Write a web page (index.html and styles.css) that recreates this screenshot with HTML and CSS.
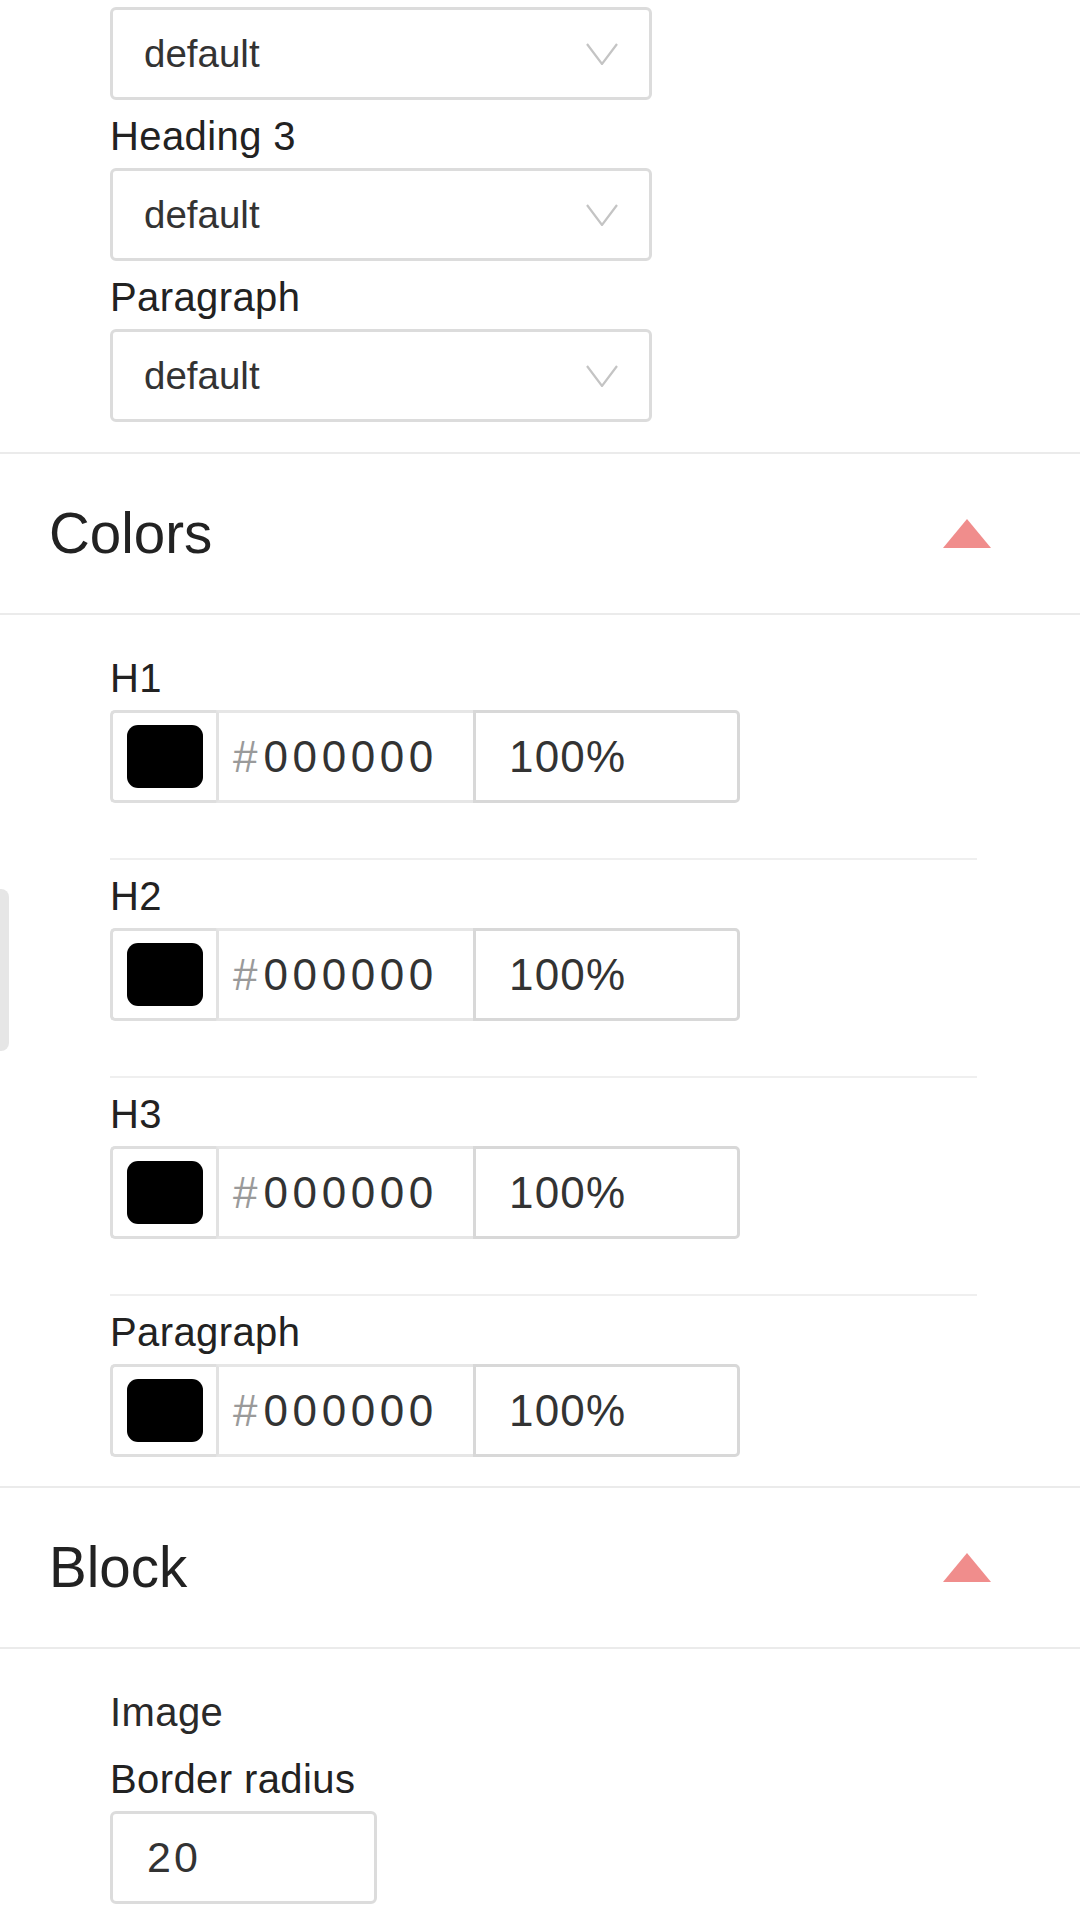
FILE: index.html
```html
<!DOCTYPE html>
<html lang="en">
<head>
<meta charset="utf-8">
<title>Style settings</title>
<link rel="stylesheet" href="styles.css">
</head>
<body>
<div class="panel">
  <section class="section">
    <div class="content content-top">
      <div class="select"><span class="select-text">default</span>
        <svg class="chev" width="32" height="22" viewBox="0 0 32 22"><polyline points="1,1 16,21 31,1" fill="none" stroke="#c4c4c4" stroke-width="2.2"/></svg>
      </div>
      <div class="label">Heading 3</div>
      <div class="select"><span class="select-text">default</span>
        <svg class="chev" width="32" height="22" viewBox="0 0 32 22"><polyline points="1,1 16,21 31,1" fill="none" stroke="#c4c4c4" stroke-width="2.2"/></svg>
      </div>
      <div class="label">Paragraph</div>
      <div class="select"><span class="select-text">default</span>
        <svg class="chev" width="32" height="22" viewBox="0 0 32 22"><polyline points="1,1 16,21 31,1" fill="none" stroke="#c4c4c4" stroke-width="2.2"/></svg>
      </div>
    </div>
  </section>

  <header class="sec-head">
    <span class="sec-title">Colors</span>
    <svg class="tri" width="48" height="29" viewBox="0 0 48 29"><polygon points="24,0 48,29 0,29" fill="#f08d8c"/></svg>
  </header>

  <section class="section">
    <div class="content">
      <div class="color-item">
        <div class="label">H1</div>
        <div class="color-row">
          <div class="swatch-cell"><div class="swatch"></div></div>
          <div class="hex-cell"><span class="hash">#</span><span class="hex">000000</span></div>
          <div class="pct-cell">100%</div>
        </div>
      </div>
      <div class="color-item">
        <div class="label">H2</div>
        <div class="color-row">
          <div class="swatch-cell"><div class="swatch"></div></div>
          <div class="hex-cell"><span class="hash">#</span><span class="hex">000000</span></div>
          <div class="pct-cell">100%</div>
        </div>
      </div>
      <div class="color-item">
        <div class="label">H3</div>
        <div class="color-row">
          <div class="swatch-cell"><div class="swatch"></div></div>
          <div class="hex-cell"><span class="hash">#</span><span class="hex">000000</span></div>
          <div class="pct-cell">100%</div>
        </div>
      </div>
      <div class="color-item last">
        <div class="label">Paragraph</div>
        <div class="color-row">
          <div class="swatch-cell"><div class="swatch"></div></div>
          <div class="hex-cell"><span class="hash">#</span><span class="hex">000000</span></div>
          <div class="pct-cell">100%</div>
        </div>
      </div>
    </div>
  </section>

  <header class="sec-head">
    <span class="sec-title">Block</span>
    <svg class="tri" width="48" height="29" viewBox="0 0 48 29"><polygon points="24,0 48,29 0,29" fill="#f08d8c"/></svg>
  </header>

  <section class="section no-border">
    <div class="content">
      <div class="label label-sub">Image</div>
      <div class="label">Border radius</div>
      <div class="num-input">20</div>
    </div>
  </section>

  <div class="side-tab"></div>
</div>
</body>
</html>
```

FILE: styles.css
```css
html, body {
  margin: 0;
  padding: 0;
  background: #ffffff;
}
body {
  width: 1080px;
  height: 1916px;
  overflow: hidden;
  font-family: "Liberation Sans", Arial, Helvetica, sans-serif;
  color: #2b2b2b;
}
.panel {
  position: relative;
  width: 1080px;
}
.section {
  border-bottom: 2px solid #ebebeb;
}
.section.no-border {
  border-bottom: none;
}
.content {
  padding: 27px 103px 29px 110px;
  display: flex;
  flex-direction: column;
  align-items: flex-start;
}
.content-top {
  padding-top: 7px;
  padding-bottom: 30px;
}
.label {
  font-size: 40px;
  letter-spacing: 0.4px;
  line-height: 44px;
  padding-top: 14px;
  padding-bottom: 10px;
  color: #222222;
}
.label-sub {
  padding-bottom: 9px;
  color: #2a2a2a;
}
.select {
  box-sizing: border-box;
  width: 542px;
  height: 93px;
  border: 3px solid #dcdcdc;
  border-radius: 6px;
  display: flex;
  align-items: center;
  justify-content: space-between;
  padding: 0 31px 0 31px;
}
.select-text {
  font-size: 38.5px;
  color: #333333;
}
.chev {
  display: block;
}
.sec-head {
  box-sizing: border-box;
  height: 161px;
  border-bottom: 2px solid #ebebeb;
  display: flex;
  align-items: center;
  justify-content: space-between;
  padding: 0 89px 0 49px;
}
.sec-title {
  font-size: 56.5px;
  color: #222222;
}
.tri {
  display: block;
}
.color-item {
  align-self: stretch;
  padding-bottom: 55px;
  border-bottom: 2px solid #efefef;
  display: flex;
  flex-direction: column;
  align-items: flex-start;
}
.color-item.last {
  padding-bottom: 0;
  border-bottom: none;
}
.color-row {
  display: flex;
  height: 93px;
  box-sizing: border-box;
}
.swatch-cell {
  box-sizing: border-box;
  width: 106px;
  height: 93px;
  border: 3px solid #dedede;
  border-right: none;
  border-radius: 5px 0 0 5px;
  display: flex;
  align-items: center;
  justify-content: center;
}
.swatch {
  width: 76px;
  height: 63px;
  background: #000000;
  border-radius: 11px;
}
.hex-cell {
  box-sizing: border-box;
  width: 257px;
  height: 93px;
  border-top: 3px solid #e6e6e6;
  border-bottom: 3px solid #e6e6e6;
  border-left: 3px solid #e2e2e2;
  display: flex;
  align-items: center;
  padding-left: 14px;
  font-size: 44px;
}
.hash {
  color: #9a9a9a;
  margin-right: 6px;
}
.hex {
  color: #333333;
  letter-spacing: 4.6px;
}
.pct-cell {
  box-sizing: border-box;
  width: 267px;
  height: 93px;
  border: 3px solid #d8d8d8;
  border-radius: 0 5px 5px 0;
  display: flex;
  align-items: center;
  padding-left: 33px;
  font-size: 44px;
  letter-spacing: 1.2px;
  color: #333333;
}
.num-input {
  box-sizing: border-box;
  width: 267px;
  height: 93px;
  border: 3px solid #dcdcdc;
  border-radius: 6px;
  display: flex;
  align-items: center;
  padding-left: 34px;
  font-size: 43px;
  letter-spacing: 3px;
  color: #333333;
}
.side-tab {
  position: absolute;
  left: 0;
  top: 889px;
  width: 9px;
  height: 162px;
  background: #e6e6e6;
  border-radius: 0 8px 8px 0;
}
```
